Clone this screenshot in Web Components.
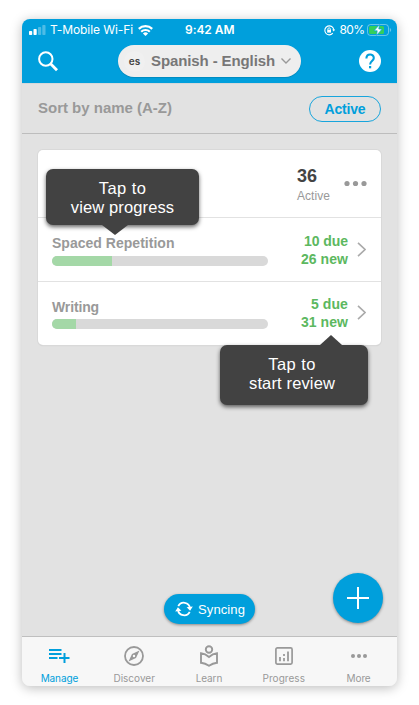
<!DOCTYPE html>
<html lang="en">
<head>
<meta charset="utf-8">
<title>Manage</title>
<style>
html,body{margin:0;background:#fff}
body{width:419px;height:705px;overflow:hidden;font-family:"Liberation Sans",Arial,sans-serif}
</style>
</head>
<body>
<phone-app></phone-app>
<script>
const define = (name, html) => {
  const t = document.createElement('template');
  t.innerHTML = '<style>*{box-sizing:border-box}svg{display:block;overflow:visible}</style>' + html;
  customElements.define(name, class extends HTMLElement {
    constructor() {
      super();
      this.attachShadow({mode: 'open'}).appendChild(t.content.cloneNode(true));
    }
  });
};

// Text run with a fixed drawn width, so labels keep their measure.
customElements.define('fit-text', class extends HTMLElement {
  connectedCallback() {
    if (this.shadowRoot) return;
    const w = this.getAttribute('w');
    this.attachShadow({mode: 'open'}).innerHTML =
      '<style>:host{display:inline-block;white-space:nowrap}span{display:inline-block}</style><span></span>';
    const s = this.shadowRoot.querySelector('span');
    s.textContent = this.getAttribute('text');
    const n = s.textContent.length;
    const d = (parseFloat(w) - s.getBoundingClientRect().width) / n;
    s.style.letterSpacing = d.toFixed(3) + 'px';
  }
});

define('status-bar', `<style>
:host{display:grid;grid-template-columns:1fr auto 1fr;height:20px;align-items:center;color:#fff;font:12px/20px Inter,sans-serif;padding:1px 6px 0 6.5px}
.l,.r{display:flex;align-items:center}.r{justify-content:flex-end}
b{font-weight:600}
</style>
<div class="l"><svg width="17" height="10" viewBox="0 0 17 10" fill="#fff"><rect y="6" width="3.2" height="4" rx=".8"/><rect x="4.5" y="4" width="3.2" height="6" rx=".8"/><g opacity=".3"><rect x="9" y="2" width="3.2" height="8" rx=".8"/><rect x="13.3" width="3.2" height="10" rx=".8"/></g></svg>
<fit-text style="margin-left:4.5px" w="83" text="T-Mobile Wi-Fi"></fit-text>
<svg style="margin-left:5px" width="15" height="11" viewBox="0 0 15 11" fill="none" stroke="#fff" stroke-width="2.2"><path d="M.8 3.9C4.500.3 10.500.3 14.200 3.900M3.200 6.700c2.400-2.300 6.200-2.300 8.600 0"/><path d="M4.900 8.500a3.700 3.700 0 0 1 5.200 0L7.500 11z" fill="#fff" stroke="none"/></svg></div>
<b><fit-text w="49.500" text="9:42 AM"></fit-text></b>
<div class="r"><svg width="11" height="11" viewBox="0 0 11 11" fill="none" stroke="#fff" stroke-width="1.1"><path d="M8.8 8.2A4.5 4.5 0 1 1 9.8 5"/><path d="M8.2 4.5h3L9.7 6.500z" fill="#fff" stroke="none"/><rect x="3.2" y="4.800" width="3.8" height="2.800" fill="#fff" stroke="none"/><path d="M3.9 5V4a1.2 1.2 0 0 1 2.4 0v1" stroke-width=".9"/></svg>
<fit-text style="margin-left:5px" w="25" text="80%"></fit-text>
<svg style="margin-left:2.500px" width="24" height="12" viewBox="0 0 24 12"><rect x=".5" y=".5" width="21" height="11" rx="3" fill="none" stroke="#fff" stroke-opacity=".4"/><path d="M22.800 4v4q1.400-.6 1.400-2t-1.400-2" fill="#fff" opacity=".4"/><rect x="2" y="2" width="15" height="8" rx="1.500" fill="#33cf5b"/><path d="M12.500.6 7 6.800h3.200L9.500 11.400l5.700-6.400h-3.400z" fill="#fff" stroke="#009fdc" stroke-width=".7"/></svg></div>`);

define('nav-bar', `<style>
:host{display:grid;grid-template-columns:96px 183px 1fr;height:44px;align-items:center}
.s{margin-left:16px}.q{justify-self:end;margin-right:16px}
.pill{height:32px;border-radius:16px;background:#eee;display:flex;align-items:center;color:#777;font:bold 15px/32px "Liberation Sans",sans-serif;box-shadow:0 1px 1px #0002}
.es{font:600 10px/20px Inter,sans-serif;color:#444;width:21px;height:21px;border-radius:50%;background:#f0f0f0;text-align:center;margin:0 6px}
</style>
<svg class="s" width="21" height="21" viewBox="0 0 21 21" fill="none" stroke="#fff"><circle cx="7.800" cy="8" r="6.700" stroke-width="2"/><path d="m12.600 12.800 6.400 6.500" stroke-width="2.800"/></svg>
<div class="pill"><span class="es">es</span><fit-text w="124" text="Spanish - English"></fit-text>
<svg style="margin-left:6px" width="10" height="6" viewBox="0 0 10 6" fill="none" stroke="#999" stroke-width="1.400"><path d="m.5.5 4.500 4.500L9.500.5"/></svg></div>
<svg class="q" width="22" height="22" viewBox="0 0 22 22"><circle cx="11" cy="11" r="11" fill="#fff"/><path d="M7.400 8.500C7.400 3.200 14.800 3.400 14.800 7.900c0 3-3.700 3.300-3.700 6.500" fill="none" stroke="#009fdc" stroke-width="2.100"/><rect x="10" y="16" width="2.200" height="2.300" fill="#009fdc"/></svg>`);

define('filter-bar', `<style>
:host{display:flex;height:51px;align-items:center;justify-content:space-between;padding:0 16px;border-bottom:1px solid #bdbdbd;border-top:1px solid #d4d8da;box-sizing:border-box;color:#999;font:bold 15px/18px "Liberation Sans",sans-serif}
.a{width:72px;height:26px;border:1px solid #18a5dc;border-radius:13px;color:#009fdc;text-align:center;font-size:14px;line-height:24px}
.t{padding-bottom:1px}
</style><fit-text class="t" w="134" text="Sort by name (A-Z)"></fit-text><div class="a"><fit-text w="41" text="Active"></fit-text></div>`);

define('deck-card', `<style>
:host{display:block;margin:16px;background:#fff;border-radius:5px;box-shadow:0 0 0 1px #d9d9d9,0 1px 1px #0002}
.top{height:68px;border-bottom:1px solid #e2e2e2;display:flex;justify-content:flex-end;padding:16px 14px 0 0}
.n{width:47px;color:#444;font:bold 18px/20px "Liberation Sans",sans-serif}
.n small{display:block;color:#999;font:12px/20px "Liberation Sans",sans-serif}
.dots{margin-top:15px}
</style><div class="top"><div class="n"><fit-text w="20" text="36"></fit-text><small><fit-text w="33" text="Active"></fit-text></small></div><svg class="dots" width="23" height="6" fill="#999"><circle cx="3" cy="2.500" r="2.600"/><circle cx="11.500" cy="2.500" r="2.600"/><circle cx="20" cy="2.500" r="2.600"/></svg></div><slot></slot>`);

customElements.define('deck-row', class extends HTMLElement {
  constructor() {
    super();
    const a = k => this.getAttribute(k);
    this.attachShadow({mode: 'open'}).innerHTML = `<style>
*{box-sizing:border-box}
:host{display:flex;height:63px;padding:0 14px;align-items:flex-start;font:bold 14px/18px "Liberation Sans",sans-serif;box-sizing:border-box}
:host([line]){border-bottom:1px solid #e2e2e2;height:64px}
.t{width:216px;padding-top:16px;color:#999}
.bar{height:10px;border-radius:5px;background:#d9d9d9;overflow:hidden;margin-top:4px}
:host(:not([line])) .bar{margin-top:3px}
.bar i{display:block;height:10px;background:#a4d8a7}
.c{flex:1;text-align:right;color:#5cb860;padding:14px 9px 0 0;line-height:18px}
:host(:not([line])) .c{padding-top:13px}
.c div{height:18px}
svg{margin:24px 1px 0 0;display:block}
:host(:not([line])) svg{margin-top:23px}
</style><div class="t"><fit-text w="${a('w')}" text="${a('name')}"></fit-text><div class="bar"><i style="width:${a('done')}px"></i></div></div>
<div class="c"><div><fit-text w="${a('dw')}" text="${a('due')}"></fit-text></div><div><fit-text w="47" text="${a('new')}"></fit-text></div></div>
<svg width="9" height="15" viewBox="0 0 9 15" fill="none" stroke="#aaa" stroke-width="1.600"><path d="m1 .8 7 6.700-7 6.700"/></svg>`;
  }
});

define('tip-bubble', `<style>
:host{position:absolute;background:#424242;border-radius:7px;color:#fff;font:16.500px/19px "Liberation Sans",sans-serif;text-align:center;box-shadow:0 2px 4px #0009;padding-top:10px;box-sizing:border-box}
:host::after{content:"";position:absolute;border:13px solid transparent}
:host([down])::after{border-width:10px 13px 0;border-top-color:#424242;top:100%;left:56px}
:host([up])::after{border-width:0 11px 10px;border-bottom-color:#424242;bottom:100%;left:100px}
::slotted(fit-text){display:block!important;height:19px}
</style><slot></slot>`);

define('sync-pill', `<style>
:host{position:absolute;display:flex;align-items:center;background:#009fdc;color:#fff;border-radius:15px;box-shadow:0 1px 3px #0006;font:13px/29px "Liberation Sans",sans-serif;padding-left:11px;box-sizing:border-box}
</style><svg width="18" height="14" viewBox="0 0 18 14" fill="none" stroke="#fff" stroke-width="1.800"><path d="M3.300 4.200A6.200 6.200 0 0 1 15 6M14.700 9.800A6.200 6.200 0 0 1 3 8"/><path d="m11.600 5.200 6.200-.6-2.700 4.200zM6.400 8.800.2 9.400l2.700-4.200z" fill="#fff" stroke="none"/></svg><fit-text style="margin-left:5px" w="47" text="Syncing"></fit-text>`);

define('add-button', `<style>
:host{position:absolute;width:50px;height:50px;border-radius:50%;background:#009fdc;box-shadow:0 1px 3px #0006;display:grid;place-items:center}
</style><svg width="22" height="22" stroke="#fff" stroke-width="2"><path d="M11 0v22M0 11h22"/></svg>`);

define('tab-bar', `<style>
:host{display:grid;grid-template-columns:repeat(5,1fr);height:50px;border-top:1px solid #bfbfbf;background:#f7f7f7;box-sizing:border-box;padding-right:1px}
</style><slot></slot>`);
define('tab-item', `<style>
:host{display:flex;flex-direction:column;align-items:center;color:#999;font:10px/12px Inter,sans-serif}
:host([on]){color:#009fdc}
.i{height:35px;display:grid;place-items:center;padding-top:3px}
</style><div class="i"><slot name="icon"></slot></div><slot></slot>`);

define('phone-app', `<style>
:host{display:block;padding:19px 22px}
main{position:relative;width:375px;height:667px;border-radius:8px;background:#e2e2e2;display:flex;flex-direction:column;overflow:hidden}
.sh{border-radius:8px;width:375px;height:667px;box-shadow:0 2px 12px #0004}
header{background:#009fdc}
section{flex:1}
tip-bubble{z-index:2}
</style><div class="sh"><main><header><status-bar></status-bar><nav-bar></nav-bar></header><filter-bar></filter-bar>
<section><deck-card><deck-row line name="Spaced Repetition" w="122.500" done="60" due="10 due" dw="44" new="26 new"></deck-row><deck-row name="Writing" w="47" done="24" due="5 due" dw="37" new="31 new"></deck-row></deck-card></section>
<tip-bubble down style="left:24px;top:150px;width:153px;height:56px"><fit-text w="47.500" text="Tap to"></fit-text><fit-text w="103.500" text="view progress"></fit-text></tip-bubble>
<tip-bubble up style="left:198px;top:326px;width:148px;height:60px;padding-right:4px"><fit-text w="47.500" text="Tap to"></fit-text><fit-text w="86" text="start review"></fit-text></tip-bubble>
<sync-pill style="left:142px;top:575px;width:91px;height:30px"></sync-pill>
<add-button style="left:311px;top:554px"></add-button>
<tab-bar>
<tab-item on><svg slot="icon" width="21" height="15" viewBox="0 0 21 15" fill="none" stroke="currentColor" stroke-width="2"><path d="M0 1h12.500M0 5h12.500M0 9h8.500M10 9h10.500M15.500 4v10"/></svg><fit-text w="37.500" text="Manage"></fit-text></tab-item>
<tab-item><svg slot="icon" width="20" height="20" viewBox="0 0 20 20" fill="none" stroke="currentColor" stroke-width="1.800"><circle cx="10" cy="10" r="9"/><path fill-rule="evenodd" fill="currentColor" stroke="none" d="M15.500 4.500 12 12l-7.500 3.500L8 8zM10 8.800a1.200 1.200 0 1 0 0 2.400 1.200 1.200 0 0 0 0-2.400"/></svg><fit-text w="41.500" text="Discover"></fit-text></tab-item>
<tab-item><svg slot="icon" width="20" height="22" viewBox="0 0 20 22" fill="none" stroke="currentColor" stroke-width="1.900"><circle cx="10" cy="4.500" r="3.200"/><path d="M10 12C7.500 9.800 4.700 8.600 2 8.300v9.500c3 .3 5.500 1.300 8 3 2.500-1.700 5-2.700 8-3V8.300C15.300 8.600 12.500 9.800 10 12z"/></svg><fit-text w="26.500" text="Learn"></fit-text></tab-item>
<tab-item><svg slot="icon" width="18" height="18" viewBox="0 0 18 18" fill="none" stroke="currentColor" stroke-width="1.700"><rect x=".9" y=".9" width="16.200" height="16.200" rx="1.500"/><path d="M5 10v4.200M9 11v3.200M9 7v2M13 4.500v9.700" stroke-width="1.800"/></svg><fit-text w="42.500" text="Progress"></fit-text></tab-item>
<tab-item><svg slot="icon" width="16" height="4" viewBox="0 0 16 4" fill="currentColor"><circle cx="2" cy="2" r="2"/><circle cx="8" cy="2" r="2"/><circle cx="14" cy="2" r="2"/></svg><fit-text w="24" text="More"></fit-text></tab-item>
</tab-bar></main></div>`);
</script>
</body>
</html>
